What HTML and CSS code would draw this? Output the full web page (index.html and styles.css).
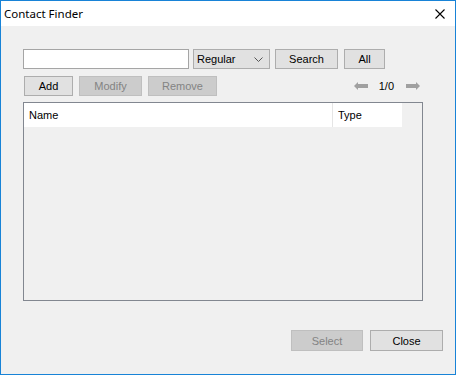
FILE: index.html
```html
<!DOCTYPE html>
<html lang="en">
<head>
    <meta charset="UTF-8">
    <title>Contact Finder</title>
    <link rel="stylesheet" href="styles.css">
</head>
<body>
    <div class="window">
        <div class="titlebar">
            <span class="title">Contact Finder</span>
            <svg class="close-x" width="10" height="10" viewBox="0 0 10 10">
                <path d="M0.5 0.5 L9.5 9.5 M9.5 0.5 L0.5 9.5" stroke="#000" stroke-width="1.1" fill="none"/>
            </svg>
        </div>
        <div class="content">
            <div class="search-row">
                <input type="text" class="search-input">
                <div class="dropdown">
                    <span>Regular</span>
                    <svg width="9" height="5" viewBox="0 0 9 5">
                        <path d="M0.5 0.5 L4.5 4.5 L8.5 0.5" stroke="#555" fill="none"/>
                    </svg>
                </div>
                <button class="btn btn-search">Search</button>
                <button class="btn btn-all">All</button>
            </div>
            <div class="action-row">
                <button class="btn btn-add">Add</button>
                <button class="btn btn-modify" disabled>Modify</button>
                <button class="btn btn-remove" disabled>Remove</button>
                <div class="pager">
                    <svg width="14" height="8" viewBox="0 0 14 8">
                        <path d="M0 4 L4 0 L4 2 L14 2 L14 6 L4 6 L4 8 Z" fill="#a0a0a0"/>
                    </svg>
                    <span class="page-num">1/0</span>
                    <svg width="14" height="8" viewBox="0 0 14 8">
                        <path d="M14 4 L10 0 L10 2 L0 2 L0 6 L10 6 L10 8 Z" fill="#a0a0a0"/>
                    </svg>
                </div>
            </div>
            <div class="list">
                <div class="list-header">
                    <div class="col col-name">Name</div>
                    <div class="col col-type">Type</div>
                </div>
            </div>
            <div class="footer">
                <button class="btn btn-select" disabled>Select</button>
                <button class="btn btn-close">Close</button>
            </div>
        </div>
    </div>
</body>
</html>
```

FILE: styles.css
```css
body {
    margin: 0;
    font-family: 'Liberation Sans', Arial, sans-serif;
}
.window {
    width: 456px;
    height: 375px;
    box-sizing: border-box;
    border: 1px solid #1883d7;
    display: flex;
    flex-direction: column;
}
.titlebar {
    height: 25px;
    background: #fff;
    display: flex;
    align-items: center;
    justify-content: space-between;
    padding: 0 10px 0 3px;
}
.title {
    font-family: 'Noto Sans', sans-serif;
    font-size: 11.5px;
    color: #000;
}
.close-x {
    margin-top: 1px;
}
.content {
    flex: 1;
    background: #f0f0f0;
    padding: 23px 12px 0 22px;
    display: flex;
    flex-direction: column;
}
.search-row {
    display: flex;
    height: 20px;
}
.search-input {
    width: 166px;
    height: 20px;
    box-sizing: border-box;
    border: 1px solid #a5a5a5;
    background: #fff;
    margin: 0 4px 0 0;
    padding: 0;
}
.dropdown {
    width: 77px;
    height: 20px;
    box-sizing: border-box;
    border: 1px solid #adadad;
    background: #e1e1e1;
    display: flex;
    align-items: center;
    justify-content: space-between;
    padding: 0 6px 0 3px;
    font-size: 11px;
    color: #000;
    margin-right: 5px;
}
.btn {
    height: 20px;
    box-sizing: border-box;
    border: 1px solid #adadad;
    background: #e1e1e1;
    font-family: 'Liberation Sans', Arial, sans-serif;
    font-size: 11px;
    color: #000;
    padding: 0;
}
.btn:disabled {
    background: #cccccc;
    border-color: #bfbfbf;
    color: #838383;
}
.btn-search {
    width: 63px;
    margin-right: 6px;
}
.btn-all {
    width: 41px;
}
.action-row {
    display: flex;
    align-items: center;
    margin-top: 7px;
    height: 20px;
    padding-left: 1px;
}
.btn-add {
    width: 49px;
    margin-right: 6px;
}
.btn-modify {
    width: 63px;
    margin-right: 6px;
}
.btn-remove {
    width: 69px;
}
.pager {
    margin-left: auto;
    margin-right: 23px;
    display: flex;
    align-items: center;
}
.page-num {
    font-size: 11px;
    margin: 0 12px 0 11px;
}
.list {
    margin-top: 6px;
    width: 400px;
    height: 199px;
    box-sizing: border-box;
    border: 1px solid #828790;
}
.list-header {
    display: flex;
    height: 24px;
}
.col {
    background: #fff;
    font-size: 11px;
    display: flex;
    align-items: center;
    padding-left: 5px;
    box-sizing: border-box;
}
.col-name {
    width: 309px;
    border-right: 1px solid #e5e5e5;
}
.col-type {
    width: 69px;
}
.footer {
    display: flex;
    justify-content: flex-end;
    margin-top: 29px;
}
.btn-select {
    width: 72px;
    height: 21px;
    margin-right: 7px;
}
.btn-close {
    width: 73px;
    height: 21px;
}
```
